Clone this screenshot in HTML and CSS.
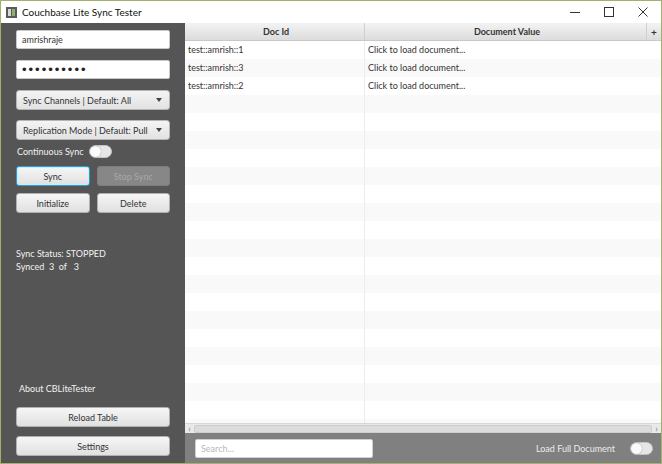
FILE: index.html
```html
<!DOCTYPE html>
<html lang="en">
<head>
    <meta charset="UTF-8">
    <title>Couchbase Lite Sync Tester</title>
    <link rel="stylesheet" href="styles.css">
</head>
<body>
    <div class="window">
        <!-- Title bar -->
        <div class="titlebar">
            <svg class="app-icon" width="11" height="11" viewBox="0 0 11 11">
                <rect x="0" y="0" width="11" height="11" fill="#5a5a5a"/>
                <rect x="2" y="2" width="3" height="7" fill="#d8d8d8"/>
                <rect x="6" y="2" width="3" height="7" fill="#8fb06a"/>
            </svg>
            <span class="title">Couchbase Lite Sync Tester</span>
            <div class="controls">
                <svg width="10" height="10" viewBox="0 0 10 10"><line x1="0" y1="5.5" x2="10" y2="5.5" stroke="#333" stroke-width="1"/></svg>
                <svg width="10" height="10" viewBox="0 0 10 10"><rect x="0.5" y="0.5" width="9" height="9" fill="none" stroke="#333" stroke-width="1"/></svg>
                <svg width="10" height="10" viewBox="0 0 10 10"><path d="M0.5 0.5 L9.5 9.5 M9.5 0.5 L0.5 9.5" stroke="#333" stroke-width="1"/></svg>
            </div>
        </div>

        <div class="content">
            <!-- Left panel -->
            <div class="sidebar">
                <input type="text" class="field" value="amrishraje">
                <input type="password" class="field pass" value="amrishraje">
                <div class="combo">Sync Channels | Default: All <span class="arrow"></span></div>
                <div class="combo">Replication Mode | Default: Pull <span class="arrow"></span></div>
                <div class="toggle-row">
                    <span>Continuous Sync</span>
                    <span class="toggle"><span class="knob"></span></span>
                </div>
                <div class="btn-row">
                    <button class="btn focused">Sync</button>
                    <button class="btn disabled">Stop Sync</button>
                </div>
                <div class="btn-row second">
                    <button class="btn">Initialize</button>
                    <button class="btn">Delete</button>
                </div>
                <div class="status">
                    <div>Sync Status: STOPPED</div>
                    <div>Synced&nbsp; 3&nbsp; of&nbsp;&nbsp; 3</div>
                </div>
                <div class="about">About CBLiteTester</div>
                <button class="btn wide">Reload Table</button>
                <button class="btn wide last">Settings</button>
            </div>

            <!-- Right panel -->
            <div class="main">
                <div class="table">
                    <div class="thead">
                        <div class="col-id">Doc Id</div>
                        <div class="col-val">Document Value</div>
                        <div class="col-plus">+</div>
                    </div>
                    <div class="tbody" id="tbody"></div>
                </div>
                <div class="hscroll">
                    <span class="sarrow">&lsaquo;</span>
                    <span class="strack"></span>
                    <span class="sarrow">&rsaquo;</span>
                </div>
                <div class="bottombar">
                    <input type="text" class="search" placeholder="Search...">
                    <span class="load-label">Load Full Document</span>
                    <span class="toggle"><span class="knob"></span></span>
                </div>
            </div>
        </div>
    </div>

    <script>
        var docs = ['test::amrish::1', 'test::amrish::3', 'test::amrish::2'];
        var tbody = document.getElementById('tbody');
        for (var i = 0; i < 22; i++) {
            var row = document.createElement('div');
            row.className = 'row' + (i % 2 ? ' odd' : '');
            var id = document.createElement('div');
            id.className = 'col-id';
            var val = document.createElement('div');
            val.className = 'col-val';
            if (i < docs.length) {
                id.textContent = docs[i];
                val.textContent = 'Click to load document...';
            }
            row.appendChild(id);
            row.appendChild(val);
            tbody.appendChild(row);
        }
    </script>
</body>
</html>
```

FILE: styles.css
```css
body {
    margin: 0;
    padding: 0;
    font-family: Lato, "Open Sans", Arial, sans-serif;
    font-size: 9px;
    color: #333;
    background: #fff;
}
.window {
    width: 662px;
    height: 464px;
    box-sizing: border-box;
    border: 1px solid #a3b06e;
    display: flex;
    flex-direction: column;
    overflow: hidden;
}
.titlebar {
    height: 22px;
    flex: none;
    display: flex;
    align-items: center;
    background: #fff;
}
.app-icon {
    margin-left: 5px;
    margin-right: 5px;
}
.title {
    font-size: 10px;
    color: #111;
}
.controls {
    margin-left: auto;
    display: flex;
    align-items: center;
    gap: 24px;
    margin-right: 13px;
}
.content {
    flex: 1;
    display: flex;
    min-height: 0;
}
.sidebar {
    width: 184px;
    flex: none;
    background: #555555;
    box-sizing: border-box;
    padding: 7px 15px 7px 15px;
    display: flex;
    flex-direction: column;
    color: #f2f2f2;
}
.field {
    height: 19px;
    box-sizing: border-box;
    border: 1px solid #c8c8c8;
    border-radius: 2px;
    padding: 0 5px;
    font-family: inherit;
    font-size: 9px;
    color: #333;
    margin: 0 0 11px 0;
    background: #fff;
}
.field.pass {
    font-family: Arial, sans-serif;
    font-size: 13px;
    letter-spacing: 2px;
    color: #222;
}
.combo {
    height: 20px;
    box-sizing: border-box;
    border: 1px solid #b5b5b5;
    border-radius: 3px;
    background: linear-gradient(to bottom, #f4f4f4, #e2e2e2);
    color: #333;
    display: flex;
    align-items: center;
    padding: 0 6px;
    margin-bottom: 10px;
    white-space: nowrap;
}
.arrow {
    margin-left: auto;
    width: 0;
    height: 0;
    border-left: 3px solid transparent;
    border-right: 3px solid transparent;
    border-top: 4px solid #444;
    margin-right: 1px;
}
.toggle-row {
    display: flex;
    align-items: center;
    height: 16px;
    margin-top: -7px;
    margin-bottom: 7px;
    gap: 5px;
    padding-left: 1px;
}
.toggle {
    width: 23px;
    height: 13px;
    box-sizing: border-box;
    border-radius: 7px;
    background: #e6e6e6;
    border: 1px solid #c4c4c4;
    display: inline-flex;
    align-items: center;
}
.knob {
    width: 11px;
    height: 11px;
    border-radius: 50%;
    background: #fafafa;
    box-shadow: 0 0 1px rgba(0, 0, 0, 0.5);
}
.btn-row {
    display: flex;
    gap: 7px;
}
.btn-row.second {
    margin-top: 7px;
}
.btn {
    flex: 1;
    height: 20px;
    box-sizing: border-box;
    border: 1px solid #b0b0b0;
    border-radius: 3px;
    background: linear-gradient(to bottom, #f6f6f6, #e0e0e0);
    font-family: inherit;
    font-size: 9px;
    color: #333;
    padding: 0;
}
.btn.focused {
    border: 1px solid #2aa0d8;
    box-shadow: inset 0 0 0 1px #cfeaf7;
}
.btn.disabled {
    background: #878787;
    border-color: #7d7d7d;
    color: #a8a8a8;
}
.status {
    margin-top: 34px;
    line-height: 13px;
}
.about {
    margin-top: auto;
    margin-bottom: 13px;
    padding-left: 3px;
}
.btn.wide {
    flex: none;
    width: 100%;
}
.btn.last {
    margin-top: 9px;
}
.main {
    flex: 1;
    display: flex;
    flex-direction: column;
    min-width: 0;
}
.table {
    flex: 1;
    display: flex;
    flex-direction: column;
    min-height: 0;
    overflow: hidden;
}
.thead {
    height: 18px;
    flex: none;
    display: flex;
    align-items: center;
    background: linear-gradient(to bottom, #f3f3f3, #dcdcdc);
    border-bottom: 1px solid #c8c8c8;
    font-weight: bold;
    box-sizing: border-box;
}
.thead .col-id,
.thead .col-val {
    text-align: center;
    height: 100%;
    line-height: 17px;
    border-right: 1px solid #cfcfcf;
}
.col-id {
    width: 180px;
    flex: none;
    box-sizing: border-box;
    padding-left: 3px;
}
.col-val {
    flex: 1;
    box-sizing: border-box;
    padding-left: 3px;
}
.col-plus {
    width: 14px;
    text-align: center;
    font-size: 10px;
}
.tbody {
    flex: 1;
    overflow: hidden;
}
.row {
    display: flex;
    height: 18px;
    line-height: 18px;
    background: #fff;
    color: #333;
}
.row.odd {
    background: #f9f9f9;
}
.row .col-id {
    border-right: 1px solid #ececec;
}
.hscroll {
    height: 9px;
    flex: none;
    display: flex;
    align-items: center;
    background: #e9e9e9;
    border-top: 1px solid #d6d6d6;
    font-size: 9px;
    color: #777;
    line-height: 8px;
}
.sarrow {
    width: 9px;
    text-align: center;
}
.strack {
    flex: 1;
    height: 6px;
    background: #dcdcdc;
    border: 1px solid #cdcdcd;
    border-radius: 2px;
}
.bottombar {
    height: 30px;
    flex: none;
    background: #808080;
    display: flex;
    align-items: center;
    padding: 0 8px 0 10px;
}
.search {
    width: 178px;
    height: 19px;
    box-sizing: border-box;
    border: 1px solid #cfcfcf;
    border-radius: 2px;
    padding: 0 5px;
    font-family: inherit;
    font-size: 9px;
}
.search::placeholder {
    color: #b8b8b8;
}
.load-label {
    margin-left: auto;
    margin-right: 15px;
    color: #ececec;
}
```
